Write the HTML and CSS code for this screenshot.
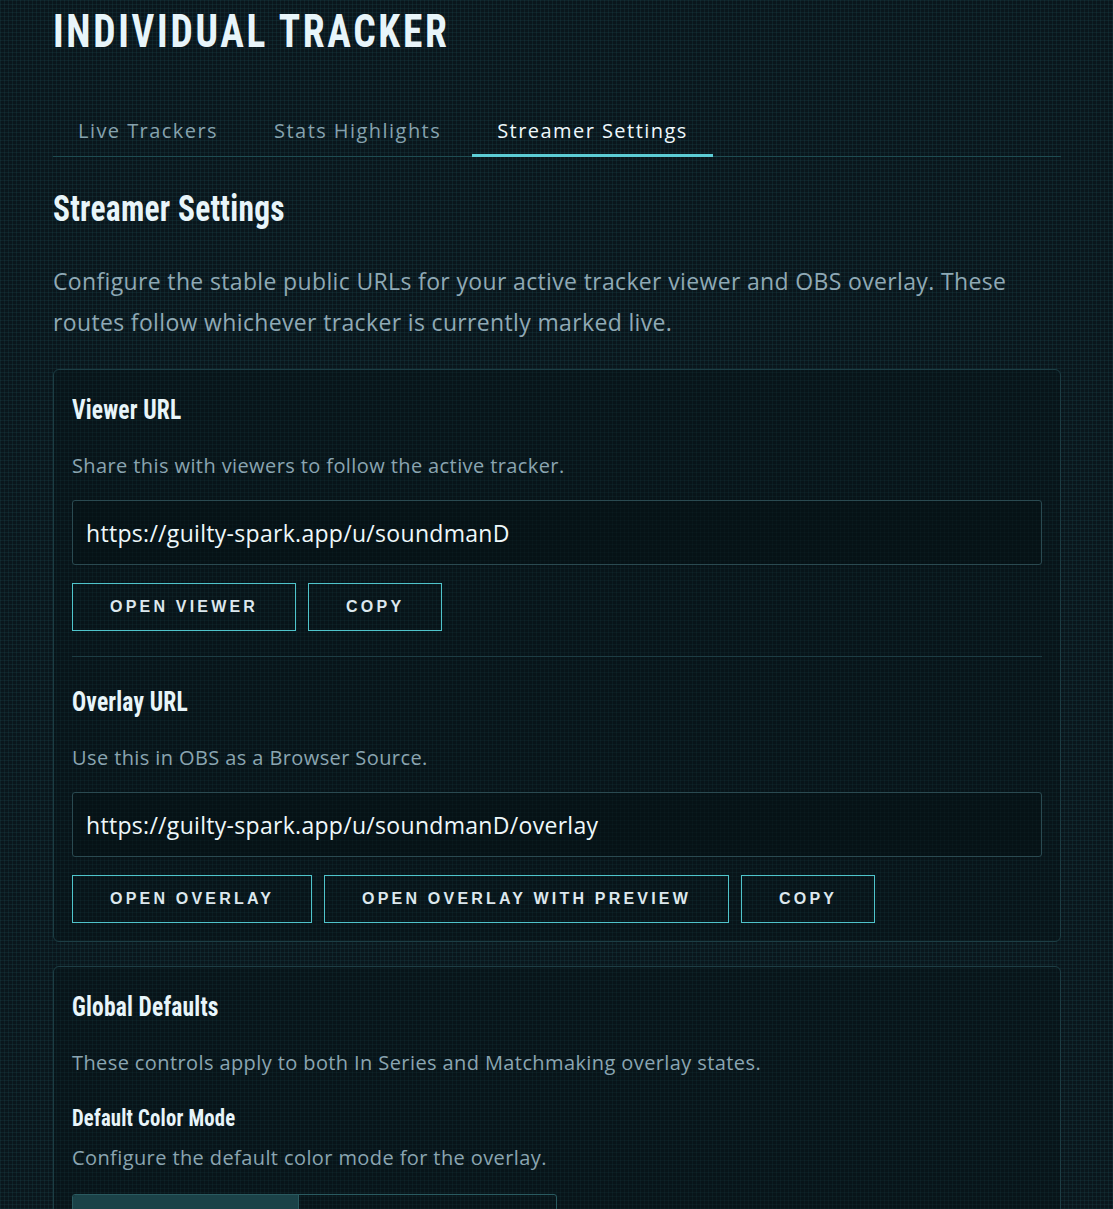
FILE: index.html
```html
<!DOCTYPE html>
<html lang="en">
<head>
  <meta charset="UTF-8">
  <title>Individual Tracker</title>
  <link rel="stylesheet" href="styles.css">
</head>
<body>
  <main class="page">
    <h1 class="page-title">INDIVIDUAL TRACKER</h1>

    <nav class="tabs">
      <a class="tab" href="#">Live Trackers</a>
      <a class="tab" href="#">Stats Highlights</a>
      <a class="tab active" href="#">Streamer Settings</a>
    </nav>

    <section class="settings">
      <h2 class="section-title">Streamer Settings</h2>
      <p class="lead">Configure the stable public URLs for your active tracker viewer and OBS overlay. These routes follow whichever tracker is currently marked live.</p>

      <div class="card">
        <div class="url-block">
          <h3 class="card-title">Viewer URL</h3>
          <p class="hint">Share this with viewers to follow the active tracker.</p>
          <input class="url-field" type="text" readonly value="https://guilty-spark.app/u/soundmanD">
          <div class="actions">
            <button class="btn">Open Viewer</button>
            <button class="btn">Copy</button>
          </div>
        </div>

        <hr class="divider">

        <div class="url-block">
          <h3 class="card-title">Overlay URL</h3>
          <p class="hint">Use this in OBS as a Browser Source.</p>
          <input class="url-field" type="text" readonly value="https://guilty-spark.app/u/soundmanD/overlay">
          <div class="actions">
            <button class="btn">Open Overlay</button>
            <button class="btn">Open Overlay with Preview</button>
            <button class="btn">Copy</button>
          </div>
        </div>
      </div>

      <div class="card">
        <h3 class="card-title">Global Defaults</h3>
        <p class="hint">These controls apply to both In Series and Matchmaking overlay states.</p>
        <h4 class="field-title">Default Color Mode</h4>
        <p class="hint hint-tight">Configure the default color mode for the overlay.</p>
        <div class="segmented">
          <button class="seg active">Player</button>
          <button class="seg">Team</button>
        </div>
      </div>
    </section>
  </main>
</body>
</html>
```

FILE: styles.css
```css
html, body {
  margin: 0;
  padding: 0;
}
body {
  background-color: #0a161c;
  background-image:
    linear-gradient(rgba(45, 120, 130, 0.13) 1px, transparent 1px),
    linear-gradient(90deg, rgba(45, 120, 130, 0.13) 1px, transparent 1px);
  background-size: 4px 4px;
  color: #e6f3f7;
  font-family: 'Open Sans', 'Noto Sans', sans-serif;
}
.page {
  padding: 5px 52px 40px 53px;
}

/* condensed display headings */
.page-title,
.section-title,
.card-title,
.field-title {
  font-family: 'Roboto Condensed', 'Roboto', 'Liberation Sans', sans-serif;
  font-stretch: condensed;
  font-weight: 700;
  color: #e8f5fa;
  transform-origin: left center;
}
.page-title {
  margin: 0;
  font-size: 47px;
  line-height: 52px;
  letter-spacing: 3.2px;
  transform: scaleX(0.84);
}

/* tabs */
.tabs {
  display: flex;
  gap: 6px;
  margin-top: 50px;
  border-bottom: 1px solid #1e4c52;
}
.tab {
  padding: 10px 25px 9px;
  margin-bottom: -1px;
  border-bottom: 3px solid transparent;
  font-size: 20px;
  line-height: 28px;
  letter-spacing: 1.45px;
  color: #86a2ae;
  text-decoration: none;
}
.tab.active {
  color: #eef8fb;
  border-bottom-color: #5cccd4;
}

.section-title {
  margin: 31px 0 0;
  font-size: 37px;
  line-height: 41px;
  letter-spacing: 0.3px;
  transform: scaleX(0.85);
}
.lead {
  margin: 32px 0 26px;
  font-size: 23px;
  line-height: 41px;
  letter-spacing: 0.35px;
  color: #8fa9b5;
}

/* cards */
.card {
  border: 1px solid #1d3d44;
  border-radius: 6px;
  background: rgba(6, 16, 20, 0.35);
  padding: 25px 18px 18px;
  margin-bottom: 24px;
}
.card-title {
  margin: 0;
  font-size: 27px;
  line-height: 31px;
  letter-spacing: 0.2px;
  transform: scaleX(0.87);
}
.hint {
  margin: 25px 0 19px;
  font-size: 20px;
  line-height: 30px;
  letter-spacing: 0.4px;
  color: #8aa5b1;
}
.hint-tight {
  margin-top: 10px;
}
.field-title {
  margin: 27px 0 0;
  font-size: 23px;
  line-height: 28px;
  letter-spacing: 0.2px;
  transform: scaleX(0.9);
}
.url-field {
  display: block;
  box-sizing: border-box;
  width: 100%;
  height: 65px;
  margin: 0;
  padding: 0 13px;
  border: 1px solid #2a4a51;
  border-radius: 3px;
  background: rgba(5, 14, 18, 0.4);
  font-family: 'Open Sans', 'Noto Sans', sans-serif;
  font-size: 23px;
  letter-spacing: 0.3px;
  color: #eef8fb;
  outline: none;
}
.actions {
  display: flex;
  gap: 12px;
  margin-top: 18px;
}
.btn {
  height: 48px;
  padding: 0 37px;
  border: 1px solid #4fc4cb;
  border-radius: 0;
  background: transparent;
  font-family: 'Liberation Sans', sans-serif;
  font-weight: 700;
  font-size: 16px;
  letter-spacing: 3.2px;
  text-transform: uppercase;
  color: #dde8ee;
  cursor: pointer;
}
.divider {
  margin: 25px 0 30px;
  border: 0;
  border-top: 1px solid #1d3d44;
}

.segmented {
  display: grid;
  grid-template-columns: 226px 1fr;
  width: 483px;
  margin-top: 21px;
  border: 1px solid #2a5a60;
  border-radius: 3px;
  overflow: hidden;
}
.seg {
  height: 48px;
  border: 0;
  border-right: 1px solid #2a5a60;
  background: transparent;
  font-family: 'Liberation Sans', sans-serif;
  font-weight: 700;
  font-size: 15px;
  letter-spacing: 2px;
  text-transform: uppercase;
  color: #dde8ee;
}
.seg:last-child {
  border-right: 0;
}
.seg.active {
  background: #1b4248;
}
```
